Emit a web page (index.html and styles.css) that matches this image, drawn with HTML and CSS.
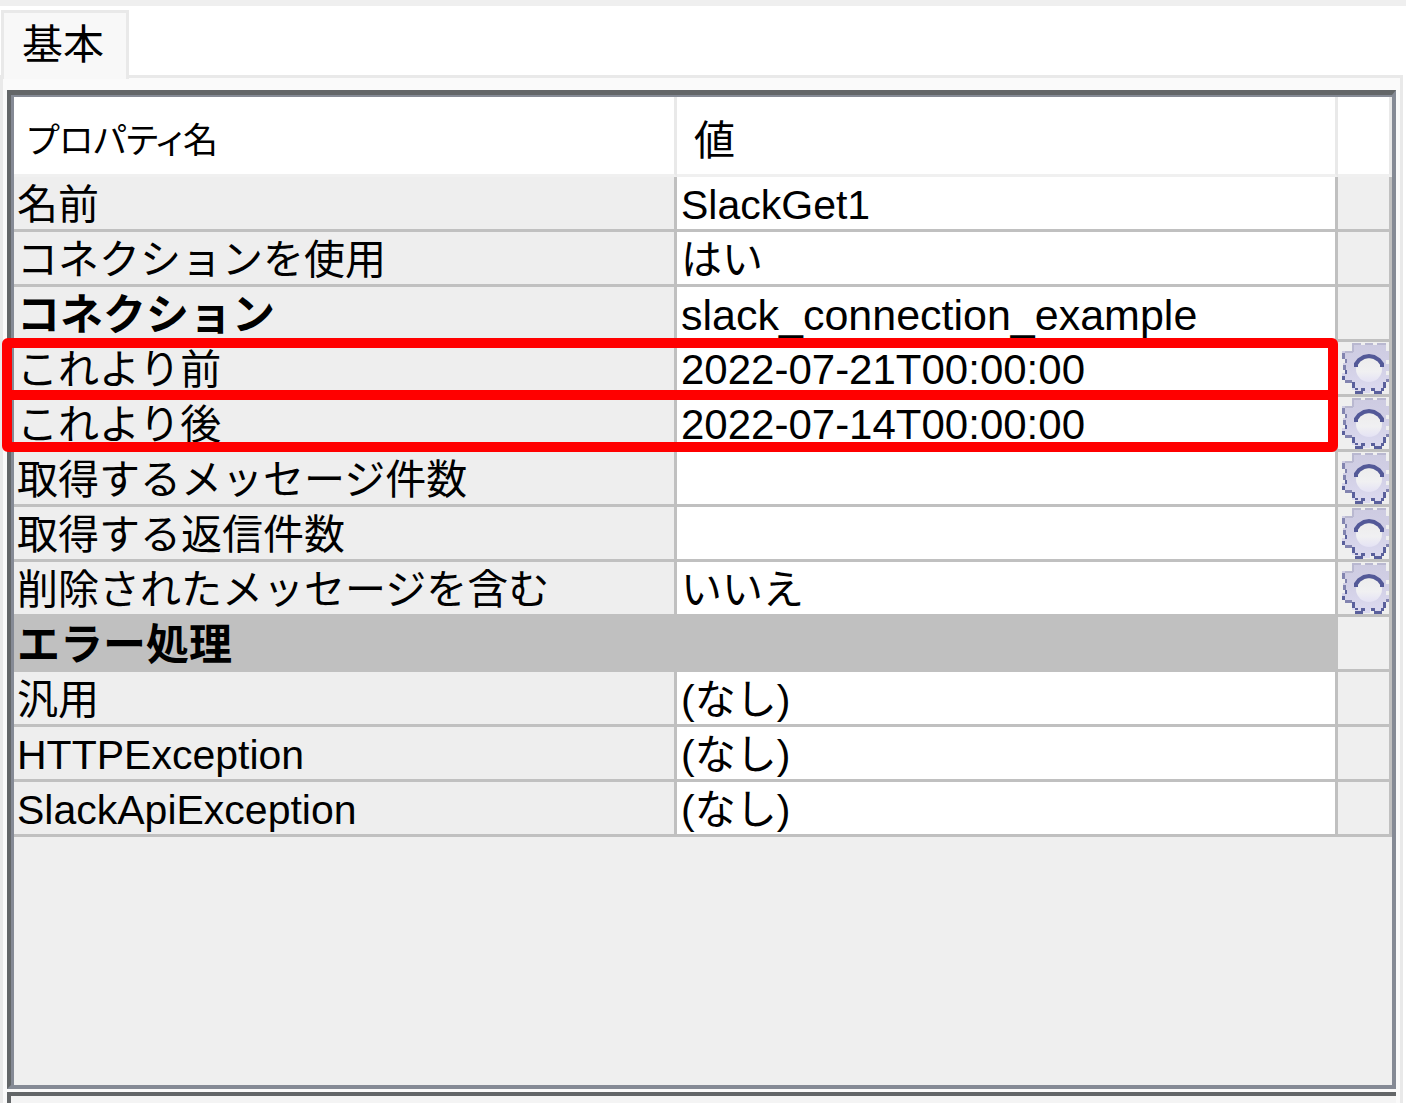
FILE: index.html
```html
<!DOCTYPE html>
<html lang="ja">
<head>
  <meta charset="UTF-8">
  <title>SlackGet1</title>
  <meta name="viewport" content="width=device-width, initial-scale=1.0">
  <link rel="stylesheet" href="styles.css">
</head>
<body>
  <svg class="defs" width="0" height="0" aria-hidden="true">
    <defs>
      <linearGradient id="gearFill" x1="0" y1="0" x2="0" y2="1">
        <stop offset="0" stop-color="#cdcbe1"/>
        <stop offset="0.5" stop-color="#d2d0e6"/>
        <stop offset="1" stop-color="#dddbf0"/>
      </linearGradient>
      <linearGradient id="holeFill" x1="0" y1="0" x2="0" y2="1">
        <stop offset="0" stop-color="#ececec"/>
        <stop offset="0.6" stop-color="#f0f0f2"/>
        <stop offset="1" stop-color="#e4e2f4"/>
      </linearGradient>
      <symbol id="gear" viewBox="0 0 48 52">
        <path fill="url(#gearFill)" d="M11 1h9v2h4V1h8v2h4V1h9v8h3v9h-3v4h3v7h-3v4h3v6h-4v7h-3v5h-7v-4h-5v4H14v-3h-3v-8H4v-3H1v-6h3v-4H2v-6h2v-4H1v-8h3V9h7z"/>
        <path fill="#b9b8d0" d="M11 1h9v2h-9zM24 1h8v2h-8zM36 1h9v2h-9zM11 1h2v9h-2zM4 9h8v2H4z"/>
        <path fill="#8284b0" d="M1 11h3v6H1zM4 17h2v4H4zM2 23h3v5H2zM45 37h3v3h-3zM4 38h7v3H4z"/>
        <path fill="#5a609c" d="M1 34h3v4H1zM4 28h2v4H4zM11 40h3v6h-3zM14 46h3v2h-3zM14 49h8v3h-8zM20 46h4v3h-4zM30 46h4v3h-4zM33 49h8v3h-8zM40 46h3v3h-3zM42 40h3v6h-3z"/>
        <circle cx="28" cy="27" r="13" fill="url(#holeFill)"/>
        <path fill="none" stroke="#535998" stroke-width="4" d="M15 25v-3l3-4 5-3 5-1 5 1 5 3 3 4v3"/>
      </symbol>
    </defs>
  </svg>

  <div class="window">
    <div class="tabs" role="tablist">
      <button class="tab" role="tab" aria-selected="true">基本</button>
    </div>

    <div class="panel">
      <div class="frame">
        <div class="grid">
          <table>
            <colgroup>
              <col class="col-name">
              <col>
              <col class="col-tool">
            </colgroup>
            <thead>
              <tr><th class="tight">プロパティ名</th><th>値</th><th></th></tr>
            </thead>
            <tbody>
              <tr><td>名前</td><td>SlackGet1</td><td></td></tr>
              <tr><td>コネクションを使用</td><td>はい</td><td></td></tr>
              <tr><td class="bold">コネクション</td><td class="wide">slack_connection_example</td><td></td></tr>
              <tr><td>これより前</td><td class="date">2022-07-21T00:00:00</td><td><button class="gear" aria-label="これより前"><svg><use href="#gear"/></svg></button></td></tr>
              <tr><td>これより後</td><td class="date">2022-07-14T00:00:00</td><td><button class="gear" aria-label="これより後"><svg><use href="#gear"/></svg></button></td></tr>
              <tr><td>取得するメッセージ件数</td><td></td><td><button class="gear" aria-label="取得するメッセージ件数"><svg><use href="#gear"/></svg></button></td></tr>
              <tr><td>取得する返信件数</td><td></td><td><button class="gear" aria-label="取得する返信件数"><svg><use href="#gear"/></svg></button></td></tr>
              <tr><td>削除されたメッセージを含む</td><td>いいえ</td><td><button class="gear" aria-label="削除されたメッセージを含む"><svg><use href="#gear"/></svg></button></td></tr>
              <tr class="section"><td class="bold" colspan="2">エラー処理</td><td></td></tr>
              <tr><td>汎用</td><td>(なし)</td><td></td></tr>
              <tr><td>HTTPException</td><td>(なし)</td><td></td></tr>
              <tr><td>SlackApiException</td><td>(なし)</td><td></td></tr>
            </tbody>
          </table>
          <div class="mark">
            <div class="mark-row"></div>
            <div class="mark-row"></div>
          </div>
        </div>
      </div>
      <div class="next-frame"></div>
    </div>
  </div>
</body>
</html>
```

FILE: styles.css
```css
* {
  box-sizing: border-box;
}

body {
  margin: 0;
  background: #ffffff;
  color: #000000;
  font-family: "Liberation Sans", "Noto Sans CJK JP", sans-serif;
  font-size: 41px;
  line-height: 48px;
}

button {
  font: inherit;
  color: inherit;
  border: none;
  background: none;
  padding: 0;
}

.defs { position: absolute; }

.window {
  display: flex;
  flex-direction: column;
  height: 100vh;
  overflow: hidden;
  border-top: 6px solid #efefef;
}

/* tabs */
.tabs {
  display: flex;
  padding: 4px 0 0 1px;
}

.tab {
  position: relative;
  z-index: 1;
  height: 69px;
  margin-bottom: -4px;
  padding: 0 22px 2px 18px;
  background: #f8f8f8;
  border: 3px solid #e9e9e9;
  border-bottom: none;
}

.panel {
  flex: 1;
  display: flex;
  flex-direction: column;
  gap: 3px;
  min-height: 0;
  margin-right: 3px;
  padding: 12px 4px 0 4px;
  background: #fafafa;
  border: 3px solid #e9e9e9;
  border-bottom: none;
}

.frame {
  flex: 1;
  display: grid;
  min-height: 0;
  border: 4px solid #858a95;
  border-top: 5px solid #636668;
  border-left: 4px solid #636668;
  background: #efefef;
}

.next-frame {
  height: 11px;
  border: 4px solid #636668;
  border-width: 4px 0 0 4px;
  background: #f4f4f4;
}

/* property table */
.grid {
  position: relative;
  min-height: 0;
  border-top: 2px solid #858a95;
  border-left: 3px solid #858a95;
}

table {
  width: 100%;
  table-layout: fixed;
  border-collapse: separate;
  border-spacing: 0;
}

.col-name { width: 663px; }
.col-tool { width: 54px; }

th {
  height: 80px;
  padding: 11px 0 0 17px;
  text-align: left;
  font-weight: normal;
  background: #ffffff;
  border-right: 3px solid #e9e9e9;
  border-bottom: 3px solid #f0f0f0;
}

.tight {
  padding-left: 13px;
  font-size: 35px;
  font-feature-settings: "palt";
}

td {
  height: 55px;
  padding: 4px 0 0 4px;
  white-space: nowrap;
  background: #ffffff;
  border-right: 3px solid #c0c0c0;
  border-bottom: 3px solid #c0c0c0;
}

td:first-child {
  padding-left: 3px;
  background: #eeeeee;
}

td:last-child {
  padding: 0 0 0 3px;
  background: #efefef;
}

.section td:first-child { background: #c0c0c0; }

.bold {
  font-size: 43px;
  font-weight: bold;
}

.wide { font-size: 43px; }
.date { font-size: 42px; }

.gear {
  display: block;
  width: 48px;
  height: 52px;
}

.gear svg {
  display: block;
  width: 48px;
  height: 52px;
}

/* red outline over the two date rows */
.mark {
  position: absolute;
  top: 241px;
  left: -12px;
  right: 54px;
  border: 10px solid #ff0000;
  border-radius: 6px;
  pointer-events: none;
}

.mark-row { height: 42px; }

.mark-row + .mark-row {
  height: 52px;
  border-top: 10px solid #ff0000;
}
```
